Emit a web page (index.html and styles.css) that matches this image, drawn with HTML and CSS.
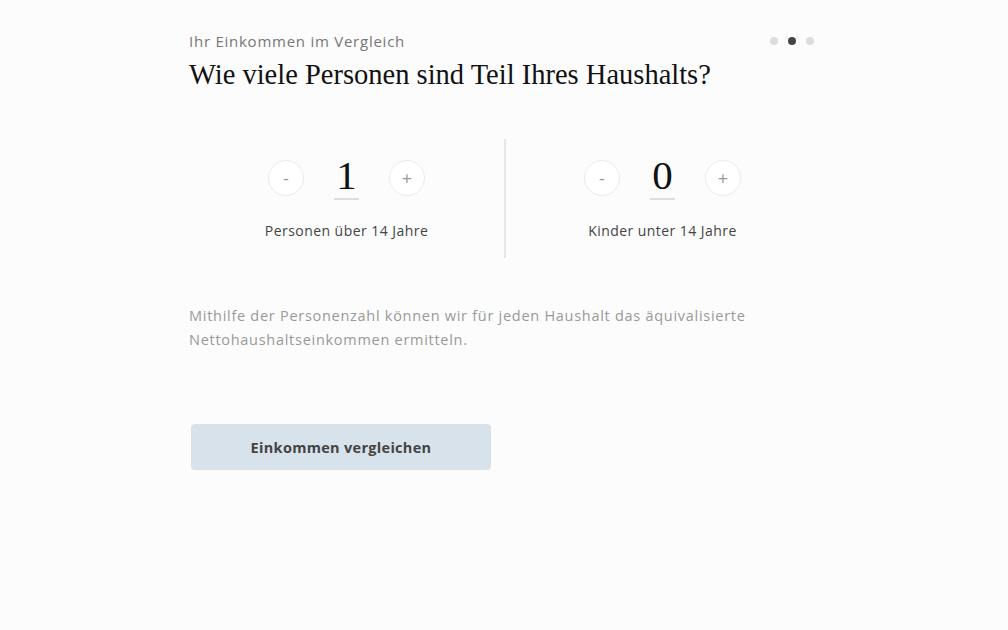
FILE: index.html
```html
<!DOCTYPE html>
<html lang="de">
<head>
<meta charset="UTF-8">
<meta name="viewport" content="width=device-width, initial-scale=1.0">
<title>Ihr Einkommen im Vergleich</title>
<link rel="stylesheet" href="styles.css">
</head>
<body>
<main class="wizard">
  <div class="wizard-top">
    <span class="kicker">Ihr Einkommen im Vergleich</span>
    <div class="steps">
      <span class="dot"></span>
      <span class="dot active"></span>
      <span class="dot"></span>
    </div>
  </div>
  <h1>Wie viele Personen sind Teil Ihres Haushalts?</h1>

  <div class="counters">
    <div class="counter">
      <div class="counter-row">
        <button class="step-btn">-</button>
        <div class="count">1</div>
        <button class="step-btn">+</button>
      </div>
      <div class="counter-lbl">Personen über 14 Jahre</div>
    </div>
    <div class="counter">
      <div class="counter-row">
        <button class="step-btn">-</button>
        <div class="count">0</div>
        <button class="step-btn">+</button>
      </div>
      <div class="counter-lbl">Kinder unter 14 Jahre</div>
    </div>
  </div>

  <p class="hint">Mithilfe der Personenzahl können wir für jeden Haushalt das äquivalisierte Nettohaushaltseinkommen ermitteln.</p>

  <button class="btn-submit">Einkommen vergleichen</button>
</main>
</body>
</html>
```

FILE: styles.css
```css
:root { --text:#111; --grau:#777; --hell:#999; --linie:#e6e6e6; --bg:#fcfcfc; }
* { margin:0; padding:0; box-sizing:border-box; }
body { font-family:'Open Sans','Noto Sans',sans-serif; background:var(--bg); color:var(--text); }

.wizard { width:630px; margin-left:189px; padding-top:31px; }
.wizard-top { display:flex; justify-content:space-between; align-items:center; padding-right:5px; }
.kicker { font-size:15px; color:var(--grau); letter-spacing:0.75px; }
.steps { display:flex; gap:10px; }
.dot { width:8px; height:8px; border-radius:50%; background:#dcdcdc; }
.dot.active { background:#444; }

h1 { font-family:'Liberation Serif','DejaVu Serif',serif; font-weight:400; font-size:28.5px; margin-top:8px; }

/* ZÄHLER */
.counters { display:grid; grid-template-columns:315px 315px; margin-top:48px; }
.counter { display:flex; flex-direction:column; align-items:center; padding:16px 0 18px; }
.counter + .counter { border-left:2px solid var(--linie); }
.counter-row { display:flex; align-items:center; gap:30px; }
.step-btn { width:36px; height:36px; border-radius:50%; border:1px solid #ebebeb; background:#fff; color:#999; font-family:'Open Sans',sans-serif; font-size:18px; line-height:1; cursor:pointer; display:flex; align-items:center; justify-content:center; }
.count { width:25px; text-align:center; font-family:'Liberation Serif',serif; font-size:41px; line-height:41px; padding-bottom:2px; border-bottom:2px solid #ddd; }
.counter-lbl { font-size:14px; color:#444; margin-top:21px; letter-spacing:0.45px; }

.hint { font-size:14.5px; line-height:24px; color:var(--hell); margin-top:46px; padding-right:40px; letter-spacing:0.72px; }

.btn-submit { margin:72px 0 0 2px; width:300px; height:46px; border:none; border-radius:4px; background:#d8e2ea; color:#444; font-family:'Open Sans',sans-serif; font-weight:700; font-size:14.5px; letter-spacing:0.3px; cursor:pointer; }
```
